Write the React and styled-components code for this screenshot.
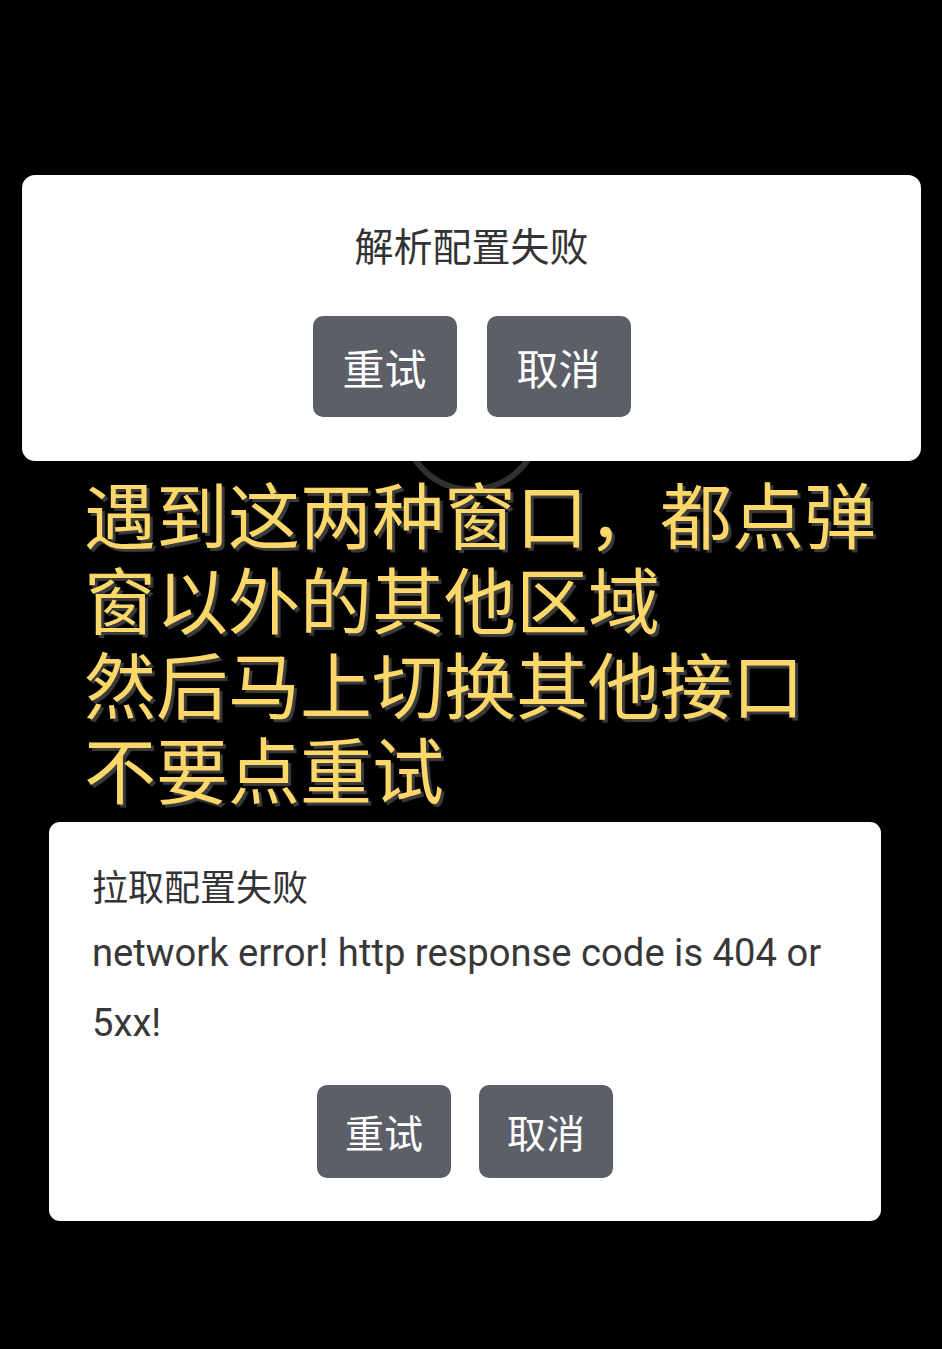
import React from "react";
import styled, { createGlobalStyle } from "styled-components";

const GlobalStyle = createGlobalStyle`
  html, body {
    margin: 0;
    padding: 0;
    background: #000;
  }
  body {
    font-family: "Noto Sans CJK SC", "Noto Sans", sans-serif;
    width: 942px;
    min-height: 1349px;
  }
`;

const Page = styled.div`
  position: relative;
  width: 942px;
  min-height: 1349px;
  background: #000;
  padding-top: 175px;
  box-sizing: border-box;
  display: flex;
  flex-direction: column;
`;

const Spinner = styled.svg`
  position: absolute;
  left: 400px;
  top: 350px;
  width: 143px;
  height: 143px;
  z-index: 0;
`;

const Dialog = styled.div`
  position: relative;
  z-index: 1;
  box-sizing: border-box;
  background: #fff;
  border-radius: ${(p) => p.$radius}px;
  width: ${(p) => p.$width}px;
  height: ${(p) => p.$height}px;
  margin-left: ${(p) => p.$left}px;
  margin-top: ${(p) => p.$top || 0}px;
  padding: ${(p) => p.$pad};
  display: flex;
  flex-direction: column;
`;

const CenterTitle = styled.div`
  font-family: "Noto Sans CJK SC", sans-serif;
  font-size: 39px;
  line-height: 54px;
  color: #333;
  text-align: center;
`;

const LeftTitle = styled.div`
  font-family: "Noto Sans CJK SC", sans-serif;
  font-size: 36px;
  line-height: 50px;
  color: #333;
`;

const Message = styled.div`
  font-family: Roboto, "Noto Sans CJK SC", sans-serif;
  font-size: 38.2px;
  line-height: 70px;
  color: #383838;
  margin-top: 8px;
`;

const ButtonRow = styled.div`
  display: flex;
  justify-content: center;
  gap: ${(p) => p.$gap}px;
  margin-top: ${(p) => p.$top}px;
`;

const Button = styled.button`
  box-sizing: border-box;
  border: none;
  padding: 0;
  width: ${(p) => p.$w}px;
  height: ${(p) => p.$h}px;
  border-radius: 10px;
  background: #5c5f67;
  color: #fff;
  font-family: "Noto Sans CJK SC", sans-serif;
  font-size: ${(p) => p.$fs}px;
  line-height: 1;
  display: flex;
  align-items: center;
  justify-content: center;
`;

const Notice = styled.div`
  position: relative;
  z-index: 1;
  margin-left: 84px;
  margin-top: 8px;
  display: flex;
  flex-direction: column;
`;

const NoticeLine = styled.div`
  height: 85px;
  font-family: "Noto Sans CJK SC", sans-serif;
  font-weight: 400;
  font-size: 72px;
  line-height: 85px;
  color: #fcd769;
  text-shadow: 3px 3px 1px #3c3c3c;
  white-space: nowrap;
`;

const lines = [
  "遇到这两种窗口，都点弹",
  "窗以外的其他区域",
  "然后马上切换其他接口",
  "不要点重试",
];

export default function App() {
  return (
    <>
      <GlobalStyle />
      <Page>
        <Spinner viewBox="0 0 143 143" aria-hidden="true">
          <circle cx="71.5" cy="71.5" r="68" fill="none" stroke="#303030" strokeWidth="6" />
        </Spinner>

        <Dialog $width={899} $height={286} $left={22} $radius={13} $pad="42px 0 0 0">
          <CenterTitle>解析配置失败</CenterTitle>
          <ButtonRow $gap={30} $top={45}>
            <Button $w={144} $h={101} $fs={42}>重试</Button>
            <Button $w={144} $h={101} $fs={42}>取消</Button>
          </ButtonRow>
        </Dialog>

        <Notice>
          {lines.map((l) => (
            <NoticeLine key={l}>{l}</NoticeLine>
          ))}
        </Notice>

        <Dialog $width={832} $height={399} $left={49} $top={13} $radius={11} $pad="38px 43px 0 43px">
          <LeftTitle>拉取配置失败</LeftTitle>
          <Message>network error! http response code is 404 or 5xx!</Message>
          <ButtonRow $gap={28} $top={27}>
            <Button $w={134} $h={93} $fs={39}>重试</Button>
            <Button $w={134} $h={93} $fs={39}>取消</Button>
          </ButtonRow>
        </Dialog>
      </Page>
    </>
  );
}
